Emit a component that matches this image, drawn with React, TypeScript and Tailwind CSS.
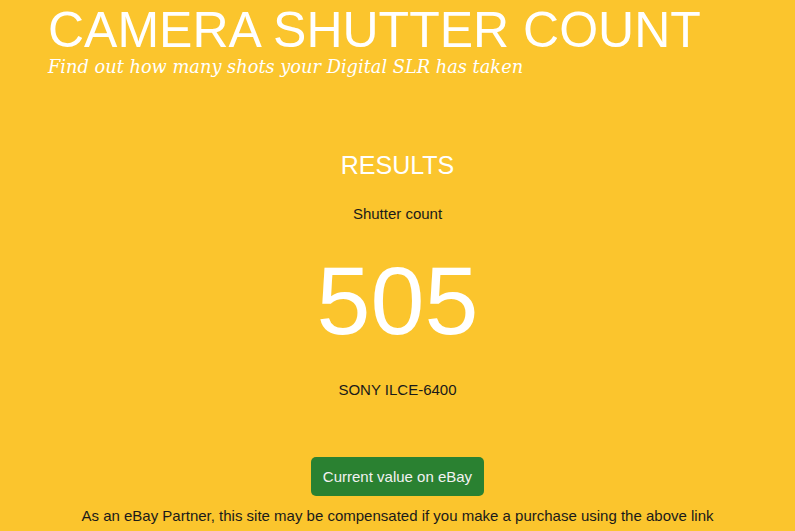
export default function App() {
  return (
    <main className="min-h-[531px] w-full bg-[#fbc52d] font-['Liberation_Sans',Arial,sans-serif]">
      {/* header */}
      <header className="pl-[48px] pt-[2px]">
        <h1 className="text-[50px] leading-[56px] text-white">CAMERA SHUTTER COUNT</h1>
        <p className="font-['DejaVu_Serif',serif] text-[17.8px] italic leading-[18px] text-white">
          Find out how many shots your Digital SLR has taken
        </p>
      </header>

      {/* results */}
      <section className="flex flex-col items-center pt-[75px] text-center">
        <h2 className="text-[25px] leading-[28px] text-white">RESULTS</h2>
        <p className="mt-[26px] text-[15px] leading-[18px] text-[#1a1a1a]">Shutter count</p>
        <div className="mt-[23px] text-[97px] leading-[110px] text-white">505</div>
        <p className="mt-[25px] text-[15px] leading-[18px] text-[#1a1a1a]">SONY ILCE-6400</p>

        <a
          href="#"
          className="mt-[58px] rounded-[5px] bg-[#2a8131] px-[12px] py-[10px] text-[15px] leading-[19px] text-[#f2f2f2]"
        >
          Current value on eBay
        </a>
        <p className="mt-[11px] text-[15px] leading-[18px] text-[#1a1a1a]">
          As an eBay Partner, this site may be compensated if you make a purchase using the above link
        </p>
      </section>
    </main>
  );
}
